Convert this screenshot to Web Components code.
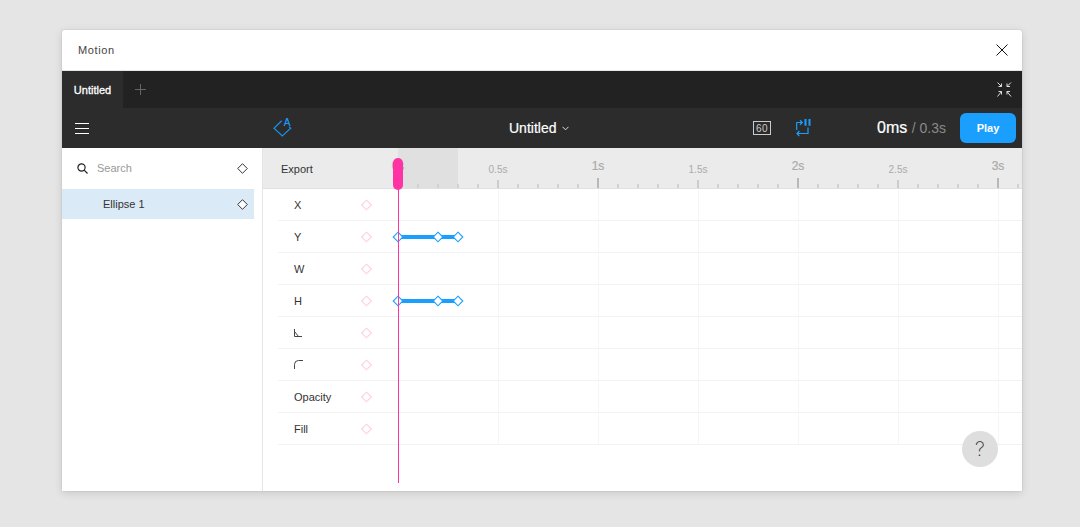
<!DOCTYPE html>
<html>
<head>
<meta charset="utf-8">
<title>Motion</title>
<style>
  html, body { margin: 0; height: 100%; overflow: hidden; }
  body { background: #e5e5e5; font-family: "Liberation Sans", Arial, sans-serif; }
</style>
</head>
<body>
<motion-window>
  <title-bar slot="title">Motion</title-bar>
  <tab-bar slot="tabs"></tab-bar>
  <tool-bar slot="tools"></tool-bar>
  <side-panel slot="side"></side-panel>
  <time-line slot="main">
    <track-row label="X"></track-row>
    <track-row label="Y" keys="1"></track-row>
    <track-row label="W"></track-row>
    <track-row label="H" keys="1"></track-row>
    <track-row icon="angle"></track-row>
    <track-row icon="radius"></track-row>
    <track-row label="Opacity"></track-row>
    <track-row label="Fill"></track-row>
  </time-line>
</motion-window>

<script>
class MotionWindow extends HTMLElement {
  connectedCallback() {
    this.attachShadow({ mode: 'open' });
    this.shadowRoot.innerHTML = `
      <style>
        :host {
          display: flex;
          flex-direction: column;
          width: 960px;
          height: 461px;
          margin: 30px 0 0 62px;
          background: #fff;
          box-shadow: 0 0 1px rgba(0,0,0,0.35), 0 2px 8px rgba(0,0,0,0.13);
          border-radius: 2px 2px 0 0;
          overflow: hidden;
          position: relative;
        }
        .body { display: flex; flex: 1; min-height: 0; }
      </style>
      <slot name="title"></slot>
      <slot name="tabs"></slot>
      <slot name="tools"></slot>
      <div class="body">
        <slot name="side"></slot>
        <slot name="main"></slot>
      </div>
    `;
  }
}

class TitleBar extends HTMLElement {
  connectedCallback() {
    this.attachShadow({ mode: 'open' });
    this.shadowRoot.innerHTML = `
      <style>
        :host {
          display: flex;
          flex: none;
          align-items: center;
          justify-content: space-between;
          height: 40px;
          padding: 0 14px 0 16px;
          border-bottom: 1px solid #e5e5e5;
          font-size: 11px;
          letter-spacing: 0.6px;
          color: #444;
        }
        svg { display: block; }
      </style>
      <slot></slot>
      <svg width="12" height="12" viewBox="0 0 12 12" fill="none" stroke="#111" stroke-width="1">
        <path d="M0.5 0.5l11 11M11.5 0.5l-11 11"/>
      </svg>
    `;
  }
}

class TabBar extends HTMLElement {
  connectedCallback() {
    this.attachShadow({ mode: 'open' });
    this.shadowRoot.innerHTML = `
      <style>
        :host {
          display: flex;
          flex: none;
          align-items: stretch;
          height: 37px;
          background: #222;
          color: #fff;
        }
        .tab {
          display: flex;
          align-items: center;
          justify-content: center;
          width: 61px;
          background: #2c2c2c;
          font-size: 11px;
          -webkit-text-stroke: 0.3px #fff;
        }
        .add { display: flex; align-items: center; margin-left: 11px; }
        .fit { display: flex; align-items: center; margin-left: auto; margin-right: 10px; }
        svg { display: block; }
      </style>
      <div class="tab">Untitled</div>
      <div class="add">
        <svg width="13" height="13" viewBox="0 0 13 13" stroke="#666" stroke-width="1" fill="none">
          <path d="M6.5 1v11M1 6.5h11"/>
        </svg>
      </div>
      <div class="fit">
        <svg width="15" height="15" viewBox="0 0 15 15" stroke="#ddd" stroke-width="1" fill="none">
          <path d="M0.5 0.5l4 4M4.5 1.5v3h-3M14 0.5l-4 4M10 1.5v3h3M0.5 14.5l4-5M1.5 9.5h3v3M14 14.5l-4-5M13 9.5h-3v3"/>
        </svg>
      </div>
    `;
  }
}

class ToolBar extends HTMLElement {
  connectedCallback() {
    this.attachShadow({ mode: 'open' });
    this.shadowRoot.innerHTML = `
      <style>
        :host {
          display: flex;
          flex: none;
          align-items: center;
          height: 40px;
          padding-left: 13px;
          background: #2c2c2c;
          color: #fff;
        }
        svg { display: block; flex: none; }
        .ease { margin-left: 184px; }
        .ease text { font: 10px "Liberation Sans", Arial, sans-serif; fill: #1a9fff; stroke: #1a9fff; stroke-width: 0.2; }
        .name {
          display: flex;
          align-items: center;
          gap: 6px;
          margin-left: 216px;
          font-size: 14px;
          -webkit-text-stroke: 0.2px #fff;
          width: 61px;
          flex: none;
        }
        .fps {
          flex: none;
          margin-left: 183px;
          width: 16px;
          height: 12px;
          border: 1px solid #ccc;
          color: #ccc;
          font-size: 10px;
          letter-spacing: 0.5px;
          line-height: 13px;
          text-align: center;
        }
        .loop { margin-left: 25px; }
        .time {
          margin-left: auto;
          font-size: 16px;
          -webkit-text-stroke: 0.2px #fff;
          white-space: nowrap;
        }
        .time span { font-size: 14px; color: #8a8a8a; -webkit-text-stroke: 0; }
        button {
          margin: 0 6px 0 14px;
          width: 56px;
          height: 30px;
          border: 0;
          border-radius: 6px;
          background: #1a9fff;
          color: #fff;
          font: bold 11px "Liberation Sans", Arial, sans-serif;
        }
      </style>
      <svg width="14" height="11" viewBox="0 0 14 11" stroke="#fff" stroke-width="1" fill="none">
        <path d="M0 0.5h14M0 5.5h14M0 10.5h14"/>
      </svg>
      <svg class="ease" width="20" height="22" viewBox="0 0 20 22" fill="none" stroke="#1a8fe3" stroke-width="1.2">
        <path d="M8.7 3.7L1 11.3l8.3 7.7 8.4-7.7-1.7-1.7"/>
        <text x="10.7" y="8.5">A</text>
      </svg>
      <div class="name">Untitled
        <svg width="7" height="5" viewBox="0 0 7 5" stroke="#ddd" stroke-width="1" fill="none"><path d="M0.5 0.8l3 3 3-3"/></svg>
      </div>
      <div class="fps">60</div>
      <svg class="loop" width="15" height="18" viewBox="0 0 15 18" fill="none" stroke="#1a9fff" stroke-width="1.2">
        <path d="M0.7 11V3.5H6M4 1.3l2.3 2.2L4 5.7"/>
        <path d="M12 8.5v6H1M3.3 12L1 14.5 3.3 17"/>
        <path d="M9.5 0v6.7M13.5 0v6.7" stroke-width="2"/>
      </svg>
      <div class="time">0ms <span>/ 0.3s</span></div>
      <button>Play</button>
    `;
  }
}

class SidePanel extends HTMLElement {
  connectedCallback() {
    this.attachShadow({ mode: 'open' });
    this.shadowRoot.innerHTML = `
      <style>
        :host {
          display: block;
          flex: none;
          width: 200px;
          border-right: 1px solid #e5e5e5;
          font-size: 11px;
        }
        .search {
          display: flex;
          align-items: center;
          height: 40px;
          padding: 0 14px 0 15px;
          border-bottom: 1px solid #fff;
          color: #999;
        }
        .search span { margin-left: 9px; }
        .search key-diamond { margin-left: auto; }
        .layer {
          display: flex;
          align-items: center;
          width: 145px;
          height: 30px;
          padding: 0 6px 0 41px;
          background: #daeaf7;
          color: #333;
        }
        .layer key-diamond { margin-left: auto; }
        svg { display: block; }
      </style>
      <div class="search">
        <svg width="11" height="11" viewBox="0 0 11 11" fill="none" stroke="#222" stroke-width="1.2">
          <circle cx="4.5" cy="4.5" r="3.6"/><path d="M7.2 7.2l3.3 3.3"/>
        </svg>
        <span>Search</span>
        <key-diamond color="#333" width="1"></key-diamond>
      </div>
      <div class="layer">Ellipse 1<key-diamond color="#333" width="1"></key-diamond></div>
    `;
  }
}

class KeyDiamond extends HTMLElement {
  connectedCallback() {
    const color = this.getAttribute('color') || '#ffcfe1';
    const stroke = this.getAttribute('width') || '1.1';
    this.attachShadow({ mode: 'open' });
    this.shadowRoot.innerHTML = `
      <style>
        :host { display: block; width: 11px; height: 11px; flex: none; }
        svg { display: block; overflow: visible; }
      </style>
      <svg width="11" height="11" viewBox="0 0 11 11">
        <path d="M5.5 0.7L10.3 5.5 5.5 10.3 0.7 5.5z" fill="#fff" stroke="${color}" stroke-width="${stroke}"/>
      </svg>
    `;
  }
}

class TimeLine extends HTMLElement {
  connectedCallback() {
    this.attachShadow({ mode: 'open' });
    const labels = [[0, '0s', 1], [100, '0.5s', 0], [200, '1s', 1], [300, '1.5s', 0], [400, '2s', 1], [500, '2.5s', 0], [600, '3s', 1]];
    let ticks = '';
    for (let i = 1; i < 32; i++) {
      const kind = i % 10 === 0 ? 'big' : i % 5 === 0 ? 'mid' : 'small';
      ticks += `<i class="${kind}" style="left:${135 + i * 20}px"></i>`;
    }
    const marks = labels.map(([x, t, big]) =>
      `<b class="${big ? 'major' : 'minor'}" style="left:${135 + x}px">${t}</b>`).join('');
    const grid = labels.slice(1).map(([x]) => `<i style="left:${135 + x}px"></i>`).join('');
    this.shadowRoot.innerHTML = `
      <style>
        :host {
          display: block;
          flex: 1;
          min-width: 0;
          position: relative;
          overflow: hidden;
        }
        .ruler {
          position: relative;
          height: 41px;
          background: #ebebeb;
          border-bottom: 1px solid #e0e0e0;
          box-sizing: border-box;
          font-size: 11px;
          color: #333;
          padding: 15px 0 0 18px;
        }
        .range { position: absolute; left: 135px; top: 0; bottom: 0; width: 60px; background: #e0e0e0; }
        .ruler i { position: absolute; bottom: 0; width: 2px; margin-left: -1px; background: #d2d2d2; }
        .ruler i.small { height: 4px; }
        .ruler i.mid { height: 8px; background: #ccc; }
        .ruler i.big { height: 10px; background: #b8b8b8; }
        .ruler b { position: absolute; transform: translateX(-50%); color: #aaa; font-weight: normal; }
        .ruler b.minor { top: 16px; font-size: 10px; }
        .ruler b.major { top: 11px; font-size: 12px; -webkit-text-stroke: 0.2px #aaa; }
        .tracks { position: relative; margin-left: 15px; }
        .grid i { position: absolute; top: 41px; height: 256px; width: 1px; background: #f6f6f6; }
        .head {
          position: absolute;
          left: 130px;
          top: 10px;
          width: 10px;
          height: 32px;
          border-radius: 5px;
          background: #ff33a3;
        }
        .line { position: absolute; left: 135px; top: 40px; height: 295px; width: 1px; background: #ff33a3; }
        .help {
          position: absolute;
          right: 24px;
          bottom: 24px;
          width: 36px;
          height: 36px;
          border-radius: 50%;
          background: #dedede;
          color: #333;
          font: 200 20px/36px Inter, sans-serif;
          text-align: center;
        }
      </style>
      <div class="ruler">Export<div class="range"></div>${ticks}${marks}</div>
      <div class="grid">${grid}</div>
      <div class="tracks"><slot></slot></div>
      <div class="line"></div>
      <div class="head"></div>
      <div class="help">?</div>
    `;
  }
}

class TrackRow extends HTMLElement {
  connectedCallback() {
    const label = this.getAttribute('label');
    const icon = this.getAttribute('icon');
    const icons = {
      angle: `<svg width="8" height="8" viewBox="0 0 8 8" fill="none" stroke="#444"><path d="M0.5 0v7.5H8M0.5 2.5l4 5"/></svg>`,
      radius: `<svg width="9" height="9" viewBox="0 0 9 9" fill="none" stroke="#444"><path d="M0.5 9V4.5a4 4 0 0 1 4-4H9"/></svg>`
    };
    const keys = this.hasAttribute('keys') ? `
      <div class="bar"></div>
      <key-diamond color="#1a9fff" style="left:114px"></key-diamond>
      <key-diamond color="#1a9fff" style="left:154px"></key-diamond>
      <key-diamond color="#1a9fff" style="left:174px"></key-diamond>` : '';
    this.attachShadow({ mode: 'open' });
    this.shadowRoot.innerHTML = `
      <style>
        :host {
          display: flex;
          align-items: center;
          position: relative;
          height: 31px;
          padding-left: 16px;
          border-bottom: 1px solid #f2f2f2;
          font-size: 11px;
          color: #333;
        }
        .label { width: 67px; }
        svg { display: block; }
        .bar { position: absolute; left: 118px; top: 14px; width: 62px; height: 4px; background: #1a9fff; }
        .keys { display: contents; }
        .keys key-diamond { position: absolute; top: 10px; transform: translate(0.5px, 0.5px); }
        .pin { transform: translateY(0.5px); }
      </style>
      <div class="label">${label || icons[icon]}</div>
      <key-diamond class="pin"></key-diamond>
      <div class="keys">${keys}</div>
    `;
  }
}

customElements.define('motion-window', MotionWindow);
customElements.define('title-bar', TitleBar);
customElements.define('tab-bar', TabBar);
customElements.define('tool-bar', ToolBar);
customElements.define('side-panel', SidePanel);
customElements.define('key-diamond', KeyDiamond);
customElements.define('time-line', TimeLine);
customElements.define('track-row', TrackRow);
</script>
</body>
</html>
